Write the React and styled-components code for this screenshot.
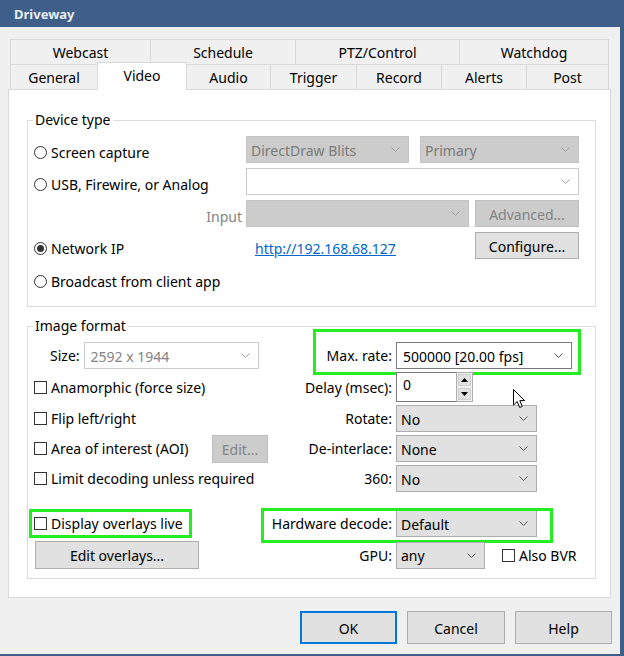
import React from "react";
import styled, { createGlobalStyle } from "styled-components";

const GlobalStyle = createGlobalStyle`
  html, body {
    margin: 0;
    padding: 0;
    background: #f0f0f0;
  }
  body {
    font-family: "Noto Sans", "Liberation Sans", sans-serif;
    font-size: 14px;
    color: #000;
  }
  * {
    box-sizing: border-box;
  }
`;

const Window = styled.div`
  position: relative;
  width: 624px;
  height: 656px;
  display: flex;
  flex-direction: column;
  background: #f0f0f0;
  border-right: 4px solid #3e5f8a;
  border-bottom: 2px solid #3e5f8a;
  overflow: hidden;
`;

const TitleBar = styled.div`
  height: 27px;
  flex: none;
  display: flex;
  align-items: center;
  padding-left: 14px;
  background: #3e5f8a;
  color: #e9edf3;
  font-weight: 700;
  font-size: 13px;
`;

const Body = styled.div`
  flex: 1;
  display: flex;
  flex-direction: column;
  padding: 12px 9px 0 8px;
`;

const TabRow = styled.div`
  display: flex;
  height: 26px;
  margin: ${(p) => (p.$second ? "-1px 2px 0" : "0 2px")};
`;

const Tab = styled.div`
  width: ${(p) => p.$w}px;
  display: flex;
  align-items: center;
  justify-content: center;
  border: 1px solid #d9d9d9;
  border-right: none;
  background: #f0f0f0;
  white-space: nowrap;
  &:last-child {
    border-right: 1px solid #d9d9d9;
  }
  ${(p) =>
    p.$active &&
    `
    position: relative;
    z-index: 1;
    height: 28px;
    margin: -2px -1px -1px 0;
    padding-bottom: 3px;
    background: #fff;
    border-right: 1px solid #d9d9d9;
    border-bottom: none;
  `}
`;

const Panel = styled.div`
  height: 509px;
  margin-top: -1px;
  padding: 20px 14px 0 18px;
  background: #fff;
  border: 1px solid #d9d9d9;
`;

const Group = styled.fieldset`
  margin: ${(p) => (p.$spaced ? "9px" : "0")} 0 0 0;
  padding: 6px 16px ${(p) => p.$pb}px 6px;
  border: 1px solid #dcdcdc;
  min-width: 0;
`;

const Legend = styled.legend`
  margin-left: -1px;
  padding: 0 2px;
  line-height: 20px;
  font-size: 14px;
`;

const DeviceRows = styled.div`
  display: flex;
  flex-direction: column;
  gap: 5px;
`;

const Row = styled.div`
  display: flex;
  align-items: center;
  height: 27px;
  margin-top: ${(p) => p.$mt || 0}px;
`;

const LeftCell = styled.div`
  width: 212px;
  height: 100%;
  flex: none;
  display: flex;
  align-items: center;
  justify-content: ${(p) => (p.$end ? "flex-end" : "flex-start")};
  padding-top: 5px;
  padding-right: ${(p) => (p.$end ? 4 : 0)}px;
  color: ${(p) => (p.$muted ? "#838383" : "#000")};
  white-space: nowrap;
`;

const Radio = styled.span`
  position: relative;
  width: 13px;
  height: 13px;
  flex: none;
  margin-right: 4px;
  border: 1px solid #333;
  border-radius: 50%;
  background: #fff;
  &::after {
    content: "";
    display: ${(p) => (p.$checked ? "block" : "none")};
    position: absolute;
    left: 2px;
    top: 2px;
    width: 7px;
    height: 7px;
    border-radius: 50%;
    background: #333;
  }
`;

const Check = styled.span`
  width: 13px;
  height: 13px;
  flex: none;
  margin-right: 4px;
  margin-left: ${(p) => p.$ml || 0}px;
  border: 1px solid #333;
  background: #fff;
`;

const comboTheme = {
  disabled: { bg: "#cccccc", border: "#c4c4c4", color: "#7a7a7a", arrow: "#a0a0a0", pad: 4 },
  blank: { bg: "#ffffff", border: "#cccccc", color: "#838383", arrow: "#a0a0a0", pad: 6 },
  edit: { bg: "#ffffff", border: "#7a7a7a", color: "#000", arrow: "#555", pad: 6 },
  normal: { bg: "#e1e1e1", border: "#adadad", color: "#000", arrow: "#555", pad: 4 },
};

const ComboBox = styled.div`
  width: ${(p) => p.$w}px;
  height: 27px;
  flex: none;
  display: flex;
  align-items: center;
  padding-left: ${(p) => comboTheme[p.$variant].pad}px;
  padding-right: 8px;
  margin-left: ${(p) => p.$ml || 0}px;
  background: ${(p) => comboTheme[p.$variant].bg};
  border: 1px solid ${(p) => comboTheme[p.$variant].border};
  color: ${(p) => comboTheme[p.$variant].color};
  white-space: nowrap;
`;

const ComboText = styled.span`
  flex: 1;
  padding-top: 1px;
  overflow: hidden;
`;

const Combo = ({ width, variant = "normal", ml, children }) => (
  <ComboBox $w={width} $variant={variant} $ml={ml}>
    <ComboText>{children}</ComboText>
    <svg width="9" height="5" viewBox="0 0 9 5">
      <path d="M0.5 0.5 L4.5 4.5 L8.5 0.5" fill="none" stroke={comboTheme[variant].arrow} strokeWidth="1" />
    </svg>
  </ComboBox>
);

const Button = styled.div`
  width: ${(p) => p.$w}px;
  height: ${(p) => p.$h || 27}px;
  flex: none;
  display: flex;
  align-items: center;
  justify-content: center;
  padding-top: 1px;
  margin-left: ${(p) => (p.$auto ? "auto" : `${p.$ml || 0}px`)};
  background: ${(p) => (p.$disabled ? "#cccccc" : "#e1e1e1")};
  border: ${(p) => (p.$default ? "2px solid #0078d7" : `1px solid ${p.$disabled ? "#bfbfbf" : "#adadad"}`)};
  color: ${(p) => (p.$disabled ? "#838383" : "#000")};
  white-space: nowrap;
`;

const Link = styled.a`
  margin: 6px 0 0 9px;
  color: #0066cc;
  text-decoration: underline;
`;

const FormGrid = styled.div`
  display: grid;
  grid-template-columns: 234px 1fr;
  grid-template-rows: ${(p) => p.$rows};
  row-gap: 3px;
  margin-top: ${(p) => p.$mt || 0}px;
`;

const Cell = styled.div`
  position: relative;
  display: flex;
  align-items: ${(p) => p.$align || "center"};
  padding-left: ${(p) => p.$pl || 0}px;
  white-space: nowrap;
`;

const FieldLabel = styled.span`
  width: 128px;
  flex: none;
  padding-right: 4px;
  text-align: right;
  white-space: nowrap;
`;

const SizeLabel = styled.span`
  margin-right: 4px;
`;

const Highlight = styled.div`
  position: absolute;
  left: ${(p) => p.$x}px;
  top: ${(p) => p.$y}px;
  width: ${(p) => p.$w}px;
  height: ${(p) => p.$h}px;
  border: 3px solid #22ee22;
  pointer-events: none;
`;

const SpinBox = styled.div`
  width: 77px;
  height: 30px;
  display: flex;
`;

const SpinField = styled.div`
  flex: 1;
  padding: 2px 0 0 6px;
  border: 1px solid #7a7a7a;
  border-right: none;
  background: #fff;
`;

const SpinButtons = styled.div`
  width: 17px;
  display: flex;
  flex-direction: column;
  border: 1px solid #adadad;
  background: #f0f0f0;
`;

const SpinButton = styled.div`
  flex: 1;
  display: flex;
  align-items: center;
  justify-content: center;
  margin: 1px;
  background: #e1e1e1;
  border: 1px solid #cfcfcf;
`;

const Footer = styled.div`
  display: flex;
  justify-content: flex-end;
  gap: 10px;
  padding-top: 13px;
  margin-right: -1px;
`;

const Cursor = styled.svg`
  position: absolute;
  left: 513px;
  top: 389px;
`;

const Arrow = ({ up }) => (
  <svg width="7" height="4" viewBox="0 0 7 4">
    <path d={up ? "M0 4 L3.5 0 L7 4 Z" : "M0 0 L3.5 4 L7 0 Z"} fill="#000" />
  </svg>
);

const topTabs = [
  ["Webcast", 140],
  ["Schedule", 145],
  ["PTZ/Control", 164],
  ["Watchdog", 150],
];

const bottomTabs = [
  ["General", 87],
  ["Video", 90, true],
  ["Audio", 84],
  ["Trigger", 86],
  ["Record", 85],
  ["Alerts", 85],
  ["Post", 83],
];

export default function App() {
  return (
    <>
      <GlobalStyle />
      <Window>
        <TitleBar>Driveway</TitleBar>
        <Body>
          <TabRow>
            {topTabs.map(([label, w]) => (
              <Tab key={label} $w={w}>
                {label}
              </Tab>
            ))}
          </TabRow>
          <TabRow $second>
            {bottomTabs.map(([label, w, active]) => (
              <Tab key={label} $w={w} $active={active}>
                {label}
              </Tab>
            ))}
          </TabRow>

          <Panel>
            <Group $pb={14}>
              <Legend>Device type</Legend>
              <DeviceRows>
                <Row>
                  <LeftCell>
                    <Radio />
                    Screen capture
                  </LeftCell>
                  <Combo width={163} variant="disabled">DirectDraw Blits</Combo>
                  <Combo width={159} variant="disabled" ml={11}>Primary</Combo>
                </Row>
                <Row>
                  <LeftCell>
                    <Radio />
                    USB, Firewire, or Analog
                  </LeftCell>
                  <Combo width={333} variant="blank" />
                </Row>
                <Row>
                  <LeftCell $end $muted>Input</LeftCell>
                  <Combo width={223} variant="disabled" />
                  <Button $w={104} $ml={6} $disabled>Advanced...</Button>
                </Row>
                <Row>
                  <LeftCell>
                    <Radio $checked />
                    Network IP
                  </LeftCell>
                  <Link>http://192.168.68.127</Link>
                  <Button $w={104} $auto>Configure...</Button>
                </Row>
                <Row $mt={1}>
                  <LeftCell>
                    <Radio />
                    Broadcast from client app
                  </LeftCell>
                </Row>
              </DeviceRows>
            </Group>

            <Group $spaced $pb={9}>
              <Legend>Image format</Legend>
              <FormGrid $rows="27px 30px 27px 27px 27px">
                <Cell $pl={16}>
                  <SizeLabel>Size:</SizeLabel>
                  <Combo width={175} variant="blank">2592 x 1944</Combo>
                </Cell>
                <Cell>
                  <FieldLabel>Max. rate:</FieldLabel>
                  <Combo width={176} variant="edit">500000 [20.00 fps]</Combo>
                  <Highlight $x={45} $y={-13} $w={268} $h={46} />
                </Cell>

                <Cell>
                  <Check />
                  Anamorphic (force size)
                </Cell>
                <Cell>
                  <FieldLabel>Delay (msec):</FieldLabel>
                  <SpinBox>
                    <SpinField>0</SpinField>
                    <SpinButtons>
                      <SpinButton>
                        <Arrow up />
                      </SpinButton>
                      <SpinButton>
                        <Arrow />
                      </SpinButton>
                    </SpinButtons>
                  </SpinBox>
                </Cell>

                <Cell>
                  <Check />
                  Flip left/right
                </Cell>
                <Cell>
                  <FieldLabel>Rotate:</FieldLabel>
                  <Combo width={141}>No</Combo>
                </Cell>

                <Cell>
                  <Check />
                  Area of interest (AOI)
                  <Button $w={56} $h={28} $auto $disabled>Edit...</Button>
                </Cell>
                <Cell>
                  <FieldLabel>De-interlace:</FieldLabel>
                  <Combo width={141}>None</Combo>
                </Cell>

                <Cell>
                  <Check />
                  Limit decoding unless required
                </Cell>
                <Cell>
                  <FieldLabel>360:</FieldLabel>
                  <Combo width={141}>No</Combo>
                </Cell>
              </FormGrid>

              <FormGrid $rows="29px 28px" $mt={17}>
                <Cell>
                  <Check />
                  Display overlays live
                  <Highlight $x={-5} $y={0} $w={163} $h={29} />
                </Cell>
                <Cell>
                  <FieldLabel>Hardware decode:</FieldLabel>
                  <Combo width={141}>Default</Combo>
                  <Highlight $x={-7} $y={-1} $w={292} $h={35} />
                </Cell>

                <Cell $align="flex-start">
                  <Button $w={164} $h={28} $ml={1}>Edit overlays...</Button>
                </Cell>
                <Cell>
                  <FieldLabel>GPU:</FieldLabel>
                  <Combo width={89}>any</Combo>
                  <Check $ml={17} />
                  Also BVR
                </Cell>
              </FormGrid>
            </Group>
          </Panel>

          <Footer>
            <Button $w={97} $h={33} $default>OK</Button>
            <Button $w={98} $h={33}>Cancel</Button>
            <Button $w={97} $h={33}>Help</Button>
          </Footer>
        </Body>

        <Cursor width="13" height="20" viewBox="0 0 13 20">
          <path
            d="M0.5 0.5 L0.5 16 L4.2 12.5 L6.7 18.5 L9.2 17.4 L6.8 11.6 L11.6 11.6 Z"
            fill="#fff"
            stroke="#000"
            strokeWidth="1"
            strokeLinejoin="round"
          />
        </Cursor>
      </Window>
    </>
  );
}
